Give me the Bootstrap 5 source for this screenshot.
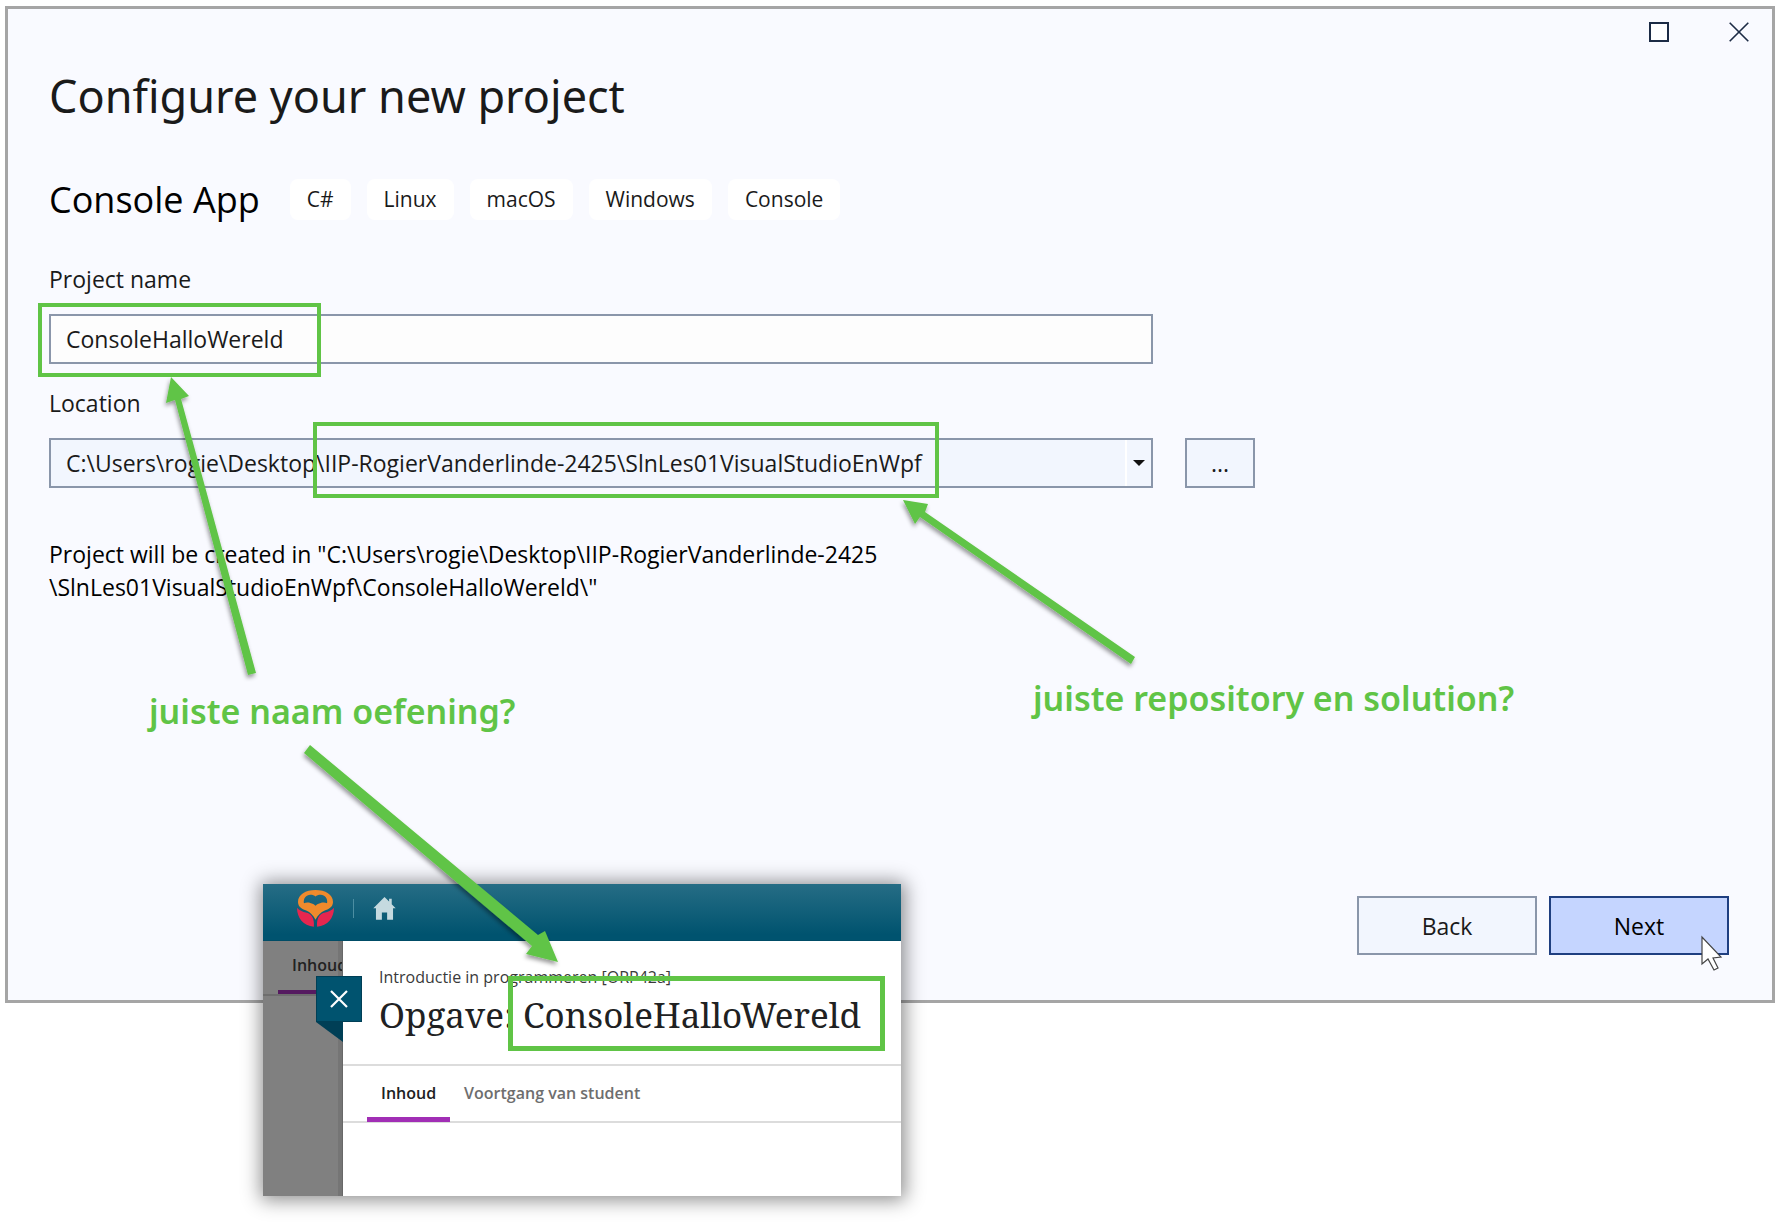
<!DOCTYPE html>
<html lang="en">
<head>
<meta charset="utf-8">
<meta name="viewport" content="width=device-width, initial-scale=1">
<title>Configure your new project</title>
<link href="https://cdn.jsdelivr.net/npm/bootstrap@5.3.0/dist/css/bootstrap.min.css" rel="stylesheet">
<style>
  :root { --mark-green: #60c446; --line: #8a96aa; --field: #f2f6fe; --teal: #00536f; }
  body { font-family: "Open Sans", "Noto Sans", sans-serif; font-size: 23px; line-height: 33px; color: #1a1a1a; background: #fff; }
  .stage { padding: 6px 7px 224px 5px; }
  .dialog { border: 3px solid #a5a5a5; background: #f9faff; }
  .titlebar { padding: 13px 23px 13px 0; gap: 60px; }
  .titlebar button { width: 20px; height: 20px; color: #1c2b45; }
  .titlebar svg { display: block; }
  .dialog-body { padding: 9px 41px 45px; }
  h1 { font-family: "Noto Sans", sans-serif; font-size: 45px; line-height: 64px; font-weight: 400; margin: 0 0 47px; }
  h2 { font-size: 36px; line-height: 46px; font-weight: 400; margin: 0; padding-top: 2px; color: #000; }
  .heading-row { gap: 30px; margin-bottom: 39px; }
  .tag { font-size: 21px; line-height: 41px; padding: 0 17px; background: #fff; border-radius: 8px; }
  .field-label { line-height: 34px; margin-bottom: 18px; display: block; }
  .field-wide { max-width: 1104px; }
  .field-box { height: 50px; border: 2px solid var(--line); border-radius: 0; padding: 0 15px; font-size: 23px; line-height: 33px; color: #1a1a1a; }
  .field-box.name-box { background: #fdfdfd; margin-bottom: 22px; }
  .field-box.path-box { background: var(--field); appearance: none; }
  .drop-cap { position: absolute; right: 2px; top: 2px; bottom: 2px; width: 26px; border-left: 2px solid #fff; pointer-events: none; }
  .flat-btn { border: 2px solid var(--line); border-radius: 0; background: var(--field); color: #1a1a1a; font-size: 23px; line-height: 33px; padding: 0; }
  .browse { width: 70px; }
  .wide-btn { width: 180px; height: 59px; padding-top: 2px; }
  .next-btn { background: #c5d5ff; border-color: #1f3f80; color: #000; }
  .path-row { gap: 32px; margin-bottom: 50px; }
  .created { color: #000; margin-bottom: 292px; }
  .wizard-footer { gap: 12px; padding-right: 2px; }

  /* course page snippet pinned on the canvas */
  .snippet { position: absolute; left: 263px; top: 884px; width: 638px; background: #fff; box-shadow: 1px 1px 18px 3px rgba(0,0,0,.45); font-size: 16px; line-height: 22px; }
  .snippet-head { height: 57px; padding: 0 0 7px 34px; background: linear-gradient(#266d85, var(--teal) 90%); border-bottom: 1px solid #004c66; }
  .snippet-head .rule { width: 1px; height: 19px; background: #4c8ea2; margin: 0 19px 0 19px; }
  .snippet-main { height: 255px; }
  .side { width: 80px; background: linear-gradient(90deg, #808080 75px, #757575 75px); border-right: 1px solid #686868; overflow: hidden; flex: none; }
  .side-tab { padding: 12px 0 17px 29px; font-weight: 600; line-height: 24px; color: #222; display: block; text-decoration: none; position: relative; }
  .side-tab::after { content: ""; position: absolute; left: 15px; right: 0; bottom: 0; height: 4px; background: #551a60; }
  .side-line { height: 2px; background: #6e6e6e; }
  .crumb { margin: 25px 0 4px 36px; color: #3a3a3a; }
  h3 { font-family: "Noto Serif", serif; font-size: 35px; line-height: 46px; font-weight: 400; margin: 0 0 26px 36px; color: #202122; }
  .tab-strip { border-top: 2px solid #dcdcdc; border-bottom: 2px solid #dcdcdc; padding-left: 24px; height: 59px; }
  .tab-strip a { color: #6e6e6e; font-weight: 600; line-height: 24px; padding: 15px 14px 0; height: 56px; text-decoration: none; }
  .tab-strip a.current { color: #202122; border-bottom: 5px solid #a12eb5; }
  .close-tab { position: absolute; left: 53px; top: 92px; width: 46px; height: 46px; background: var(--teal); border: 1px solid #003f56; padding: 0; }
  .fold { position: absolute; left: 53px; top: 138px; }

  .marks { position: absolute; left: 0; top: 0; pointer-events: none; }
  .note { position: absolute; margin: 0; font-family: "Noto Sans", sans-serif; font-size: 34px; line-height: 46px; font-weight: 600; color: var(--mark-green); white-space: nowrap; }
  .note-name { left: 149px; top: 688px; }
  .note-repo { left: 1033px; top: 675px; }
</style>
</head>
<body>
<div class="stage position-relative">
  <main class="dialog">
    <div class="titlebar d-flex justify-content-end">
      <button type="button" class="btn p-0 border-0" aria-label="Maximize"><svg width="20" height="20" viewBox="0 0 20 20" fill="#fff" stroke="currentColor" stroke-width="2"><path d="M1 1h18v18H1z"/></svg></button>
      <button type="button" class="btn p-0 border-0" aria-label="Close"><svg width="20" height="20" viewBox="0 0 20 20" fill="none" stroke="currentColor" stroke-width="1.6"><path d="M.7.7l18.6 18.6M19.3.7L.7 19.3"/></svg></button>
    </div>
    <form class="dialog-body">
      <h1>Configure your new project</h1>
      <div class="heading-row d-flex align-items-center">
        <h2>Console App</h2>
        <div class="d-flex gap-3">
          <span class="tag">C#</span><span class="tag">Linux</span><span class="tag">macOS</span><span class="tag">Windows</span><span class="tag">Console</span>
        </div>
      </div>

      <label class="field-label" for="projectName">Project name</label>
      <input class="form-control field-box field-wide name-box" id="projectName" type="text" value="ConsoleHalloWereld">

      <label class="field-label" for="location">Location</label>
      <div class="path-row d-flex">
        <div class="position-relative field-wide flex-grow-1">
          <select class="field-box path-box w-100 d-block" id="location">
            <option>C:\Users\rogie\Desktop\IIP-RogierVanderlinde-2425\SlnLes01VisualStudioEnWpf</option>
          </select>
          <span class="drop-cap d-flex align-items-center justify-content-center"><svg width="12" height="6" viewBox="0 0 12 6"><path d="M0 0h12L6 6z" fill="#111"/></svg></span>
        </div>
        <button type="button" class="btn flat-btn browse">...</button>
      </div>

      <p class="created">Project will be created in "C:\Users\rogie\Desktop\IIP-RogierVanderlinde-2425<br>\SlnLes01VisualStudioEnWpf\ConsoleHalloWereld\"</p>

      <div class="wizard-footer d-flex justify-content-end">
        <button type="button" class="btn flat-btn wide-btn">Back</button>
        <button type="submit" class="btn flat-btn wide-btn next-btn">Next</button>
      </div>
    </form>
  </main>

  <section class="snippet">
    <div class="snippet-head d-flex align-items-center">
      <svg width="37" height="37" viewBox="36 30 112 112">
        <path fill="#f08a2c" fill-rule="evenodd" d="M39 66C39 44 62 30 92 30s53 14 53 36c0 16-15 22-25 26-12 5-22 16-28 28-6-12-16-23-28-28-10-4-25-10-25-26zM57 70c8-4 18-2 24 1 5 2 9 4 11 7 2-3 6-5 11-7 6-3 16-5 24-1 3-14-7-26-19-26-7 0-13 2-16 6-3-4-9-6-16-6-12 0-22 12-19 26z"/>
        <path fill="#e6264f" d="M36 84c0 31 19 54 51 57 2-19-3-37-21-42-14-3-24-7-30-15zM148 84c0 31-19 54-51 57-2-19 3-37 21-42 14-3 24-7 30-15z"/>
      </svg>
      <span class="rule"></span>
      <svg width="23" height="23" viewBox="264 50 68 70"><path fill="#c5dae0" d="M298 50l-34 34h8v35h18V97h16v22h18V84h8l-12-12V55h-8v9z"/></svg>
    </div>
    <div class="snippet-main d-flex">
      <div class="side"><a class="side-tab" href="#">Inhoud</a><div class="side-line"></div></div>
      <div class="flex-grow-1">
        <p class="crumb">Introductie in programmeren [ORP42a]</p>
        <h3>Opgave: ConsoleHalloWereld</h3>
        <nav class="tab-strip d-flex"><a class="current" href="#">Inhoud</a><a href="#">Voortgang van student</a></nav>
      </div>
    </div>
    <svg class="fold" width="27" height="20" viewBox="0 0 27 20"><path d="M0 0h27v20z" fill="#003f56"/></svg>
    <button type="button" class="close-tab d-flex align-items-center justify-content-center" aria-label="Sluiten"><svg width="18" height="18" viewBox="0 0 18 18" stroke="#fff" stroke-width="2.2"><path d="M1 1l16 16M17 1L1 17"/></svg></button>
  </section>

  <svg class="marks" width="1782" height="1228" viewBox="0 0 1782 1228">
    <defs><filter id="soft" x="-20%" y="-20%" width="140%" height="140%"><feDropShadow dx="-1" dy="3" stdDeviation="2" flood-color="#000" flood-opacity=".4"/></filter></defs>
    <g fill="#60c446" filter="url(#soft)">
      <path d="M171 377l18 19-8 3 75 274-8 2-73-275-9 3z"/>
      <path d="M903 500l25 4-3 8 210 145-4 7-211-147-5 7z"/>
      <path d="M310 745l228 190 7-4 13 31-32-8 6-8-228-193z"/>
    </g>
    <g fill="none" stroke="#60c446">
      <path stroke-width="4" d="M40 305h279v70H40zM315 424h622v72H315z"/>
      <path stroke-width="5" d="M510.500 978.500h372v70h-372z"/>
    </g>
    <path d="M1702 937v27l6-5 6 11 4-2-5-10 8-1z" fill="#fff" stroke="#444" stroke-width="1.200"/>
  </svg>
  <p class="note note-name">juiste naam oefening?</p>
  <p class="note note-repo">juiste repository en solution?</p>
</div>
<script src="https://cdn.jsdelivr.net/npm/bootstrap@5.3.0/dist/js/bootstrap.bundle.min.js"></script>
</body>
</html>
